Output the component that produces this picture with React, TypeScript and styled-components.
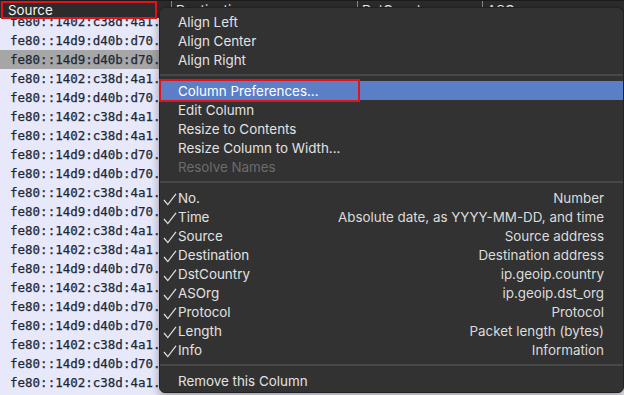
import React from "react";
import styled, { createGlobalStyle } from "styled-components";

const GlobalStyle = createGlobalStyle`
  html, body {
    margin: 0;
    padding: 0;
    background: #e8e8fb;
    overflow: hidden;
  }
  #root {
    width: 624px;
    height: 395px;
  }
`;

const Window = styled.div`
  position: relative;
  width: 624px;
  height: 395px;
  overflow: hidden;
  background: #e8e8fb;
  font-family: Inter, "Noto Sans", "Liberation Sans", sans-serif;
`;

const Header = styled.div`
  position: relative;
  z-index: 2;
  display: flex;
  height: 18px;
  background: #2c2c2c;
  border-top: 1px solid #1c1c1c;
  box-sizing: border-box;
`;

const HeaderCell = styled.div<{ $width?: number; $first?: boolean }>`
  position: relative;
  flex: ${(p) => (p.$width ? `0 0 ${p.$width}px` : "1 1 auto")};
  display: flex;
  align-items: center;
  padding-left: ${(p) => (p.$first ? "8px" : "4px")};
  font-size: 13.4px;
  color: #f4f4f4;
  box-sizing: border-box;
  border-left: ${(p) => (p.$first ? "none" : "1px solid #8a8a8a")};
  height: 17px;
`;

const RedFrame = styled.div<{ $width: number; $height: number }>`
  position: absolute;
  left: 1px;
  top: 0;
  width: ${(p) => p.$width}px;
  height: ${(p) => p.$height}px;
  border: 2px solid #e5121b;
  box-sizing: border-box;
  pointer-events: none;
`;

const ListViewport = styled.div`
  height: 377px;
  overflow: hidden;
`;

const ListScroll = styled.div`
  transform: translateY(-6px);
`;

const Row = styled.div<{ $selected?: boolean }>`
  display: flex;
  height: 19px;
  align-items: center;
  background: ${(p) => (p.$selected ? "#a6a6a6" : "#e8e8fb")};
  font-family: "DejaVu Sans Mono", "Liberation Mono", monospace;
  font-size: 12.5px;
  color: #1b2836;
  -webkit-text-stroke: 0.25px #1b2836;
`;

const Cell = styled.div<{ $width: number }>`
  flex: 0 0 ${(p) => p.$width}px;
  padding-left: 10px;
  box-sizing: border-box;
  white-space: nowrap;
  overflow: hidden;
`;

const Menu = styled.div`
  position: absolute;
  z-index: 5;
  left: 159px;
  top: 7px;
  width: 465px;
  height: 386px;
  background: #323232;
  border-radius: 6px;
  border: 1px solid #222;
  box-sizing: border-box;
  padding-top: 4px;
  box-shadow: 0 3px 10px rgba(0, 0, 0, 0.35);
  color: #e2e2e2;
  font-size: 13.4px;
`;

const Item = styled.div<{ $active?: boolean; $disabled?: boolean }>`
  position: relative;
  display: flex;
  align-items: center;
  height: 19px;
  padding: 0 19px 0 18px;
  background: ${(p) => (p.$active ? "#5a7fc6" : "transparent")};
  color: ${(p) => (p.$disabled ? "#6c6c6c" : p.$active ? "#ffffff" : "#e2e2e2")};
`;

const ItemLabel = styled.span`
  flex: 1 1 auto;
  white-space: nowrap;
`;

const ItemDetail = styled.span`
  flex: 0 0 auto;
  white-space: nowrap;
  color: #dcdcdc;
`;

const Check = styled.svg`
  position: absolute;
  left: 3px;
  top: 5px;
`;

const Separator = styled.div`
  height: 12px;
  display: flex;
  align-items: center;
  &::after {
    content: "";
    flex: 1;
    height: 2px;
    background: #474747;
  }
`;

const ItemFrame = styled.div`
  position: absolute;
  left: -1px;
  top: -2px;
  width: 201px;
  height: 23px;
  border: 2px solid #e5121b;
  box-sizing: border-box;
  pointer-events: none;
`;

const A = "fe80::1402:c38d:4a1.";
const B = "fe80::14d9:d40b:d70.";
const rows = [A, B, B, A, B, A, A, B, B, A, B, A, A, B, A, B, B, A, B, A, B];

const columns: { name: string; detail: string }[] = [
  { name: "No.", detail: "Number" },
  { name: "Time", detail: "Absolute date, as YYYY-MM-DD, and time" },
  { name: "Source", detail: "Source address" },
  { name: "Destination", detail: "Destination address" },
  { name: "DstCountry", detail: "ip.geoip.country" },
  { name: "ASOrg", detail: "ip.geoip.dst_org" },
  { name: "Protocol", detail: "Protocol" },
  { name: "Length", detail: "Packet length (bytes)" },
  { name: "Info", detail: "Information" },
];

const CheckMark: React.FC = () => (
  <Check width="14" height="13" viewBox="0 0 14 13">
    <path d="M1 7 L4.8 11.6 L13 0.8" fill="none" stroke="#e2e2e2" strokeWidth="1.2" />
  </Check>
);

export default function App() {
  return (
    <>
      <GlobalStyle />
      <Window>
        <Header>
          <HeaderCell $width={171} $first>
            Source
            <RedFrame $width={156} $height={18} />
          </HeaderCell>
          <HeaderCell $width={186}>Destination</HeaderCell>
          <HeaderCell $width={125}>DstCountry</HeaderCell>
          <HeaderCell>ASOrg</HeaderCell>
        </Header>

        <ListViewport>
          <ListScroll>
            {rows.map((addr, i) => (
              <Row key={i} $selected={i === 2}>
                <Cell $width={171}>{addr}</Cell>
                <Cell $width={186}>{addr === A ? B : A}</Cell>
              </Row>
            ))}
          </ListScroll>
        </ListViewport>

        <Menu>
          <Item><ItemLabel>Align Left</ItemLabel></Item>
          <Item><ItemLabel>Align Center</ItemLabel></Item>
          <Item><ItemLabel>Align Right</ItemLabel></Item>
          <Separator />
          <Item $active>
            <ItemLabel>Column Preferences...</ItemLabel>
            <ItemFrame />
          </Item>
          <Item><ItemLabel>Edit Column</ItemLabel></Item>
          <Item><ItemLabel>Resize to Contents</ItemLabel></Item>
          <Item><ItemLabel>Resize Column to Width...</ItemLabel></Item>
          <Item $disabled><ItemLabel>Resolve Names</ItemLabel></Item>
          <Separator />
          {columns.map((c) => (
            <Item key={c.name}>
              <CheckMark />
              <ItemLabel>{c.name}</ItemLabel>
              <ItemDetail>{c.detail}</ItemDetail>
            </Item>
          ))}
          <Separator />
          <Item><ItemLabel>Remove this Column</ItemLabel></Item>
        </Menu>
      </Window>
    </>
  );
}
